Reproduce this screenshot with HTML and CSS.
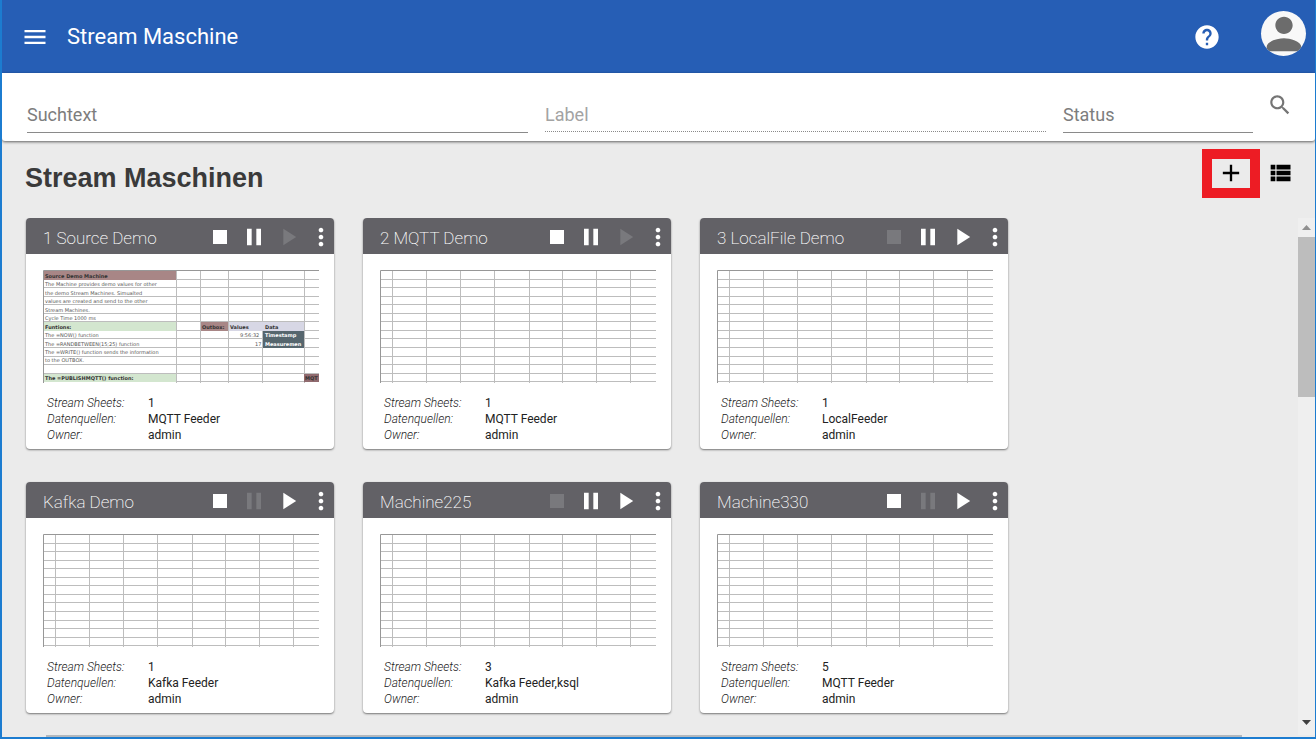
FILE: index.html
```html
<!DOCTYPE html>
<html lang="de">
<head>
<meta charset="utf-8">
<title>Stream Maschine</title>
<link rel="stylesheet" href="styles.css">
</head>
<body>
<svg class="defs" aria-hidden="true">
  <symbol id="i-menu" viewBox="0 0 24 24"><path d="M3 18h18v-2H3v2zm0-5h18v-2H3v2zm0-7v2h18V6H3z"/></symbol>
  <symbol id="i-help" viewBox="0 0 24 24"><path d="M12 2C6.48 2 2 6.48 2 12s4.480 10 10 10 10-4.480 10-10S17.520 2 12 2zm1 17h-2v-2h2v2zm2.070-7.750l-.9.920C13.450 12.900 13 13.500 13 15h-2v-.5c0-1.100.450-2.100 1.170-2.830l1.240-1.260c.370-.360.590-.860.590-1.410 0-1.100-.9-2-2-2s-2 .9-2 2H8c0-2.210 1.790-4 4-4s4 1.790 4 4c0 .880-.360 1.680-.930 2.250z"/></symbol>
  <symbol id="i-person" viewBox="0 0 24 24"><path d="M12 12c2.210 0 4-1.790 4-4s-1.790-4-4-4-4 1.790-4 4 1.790 4 4 4zm0 2c-2.670 0-8 1.340-8 4v2h16v-2c0-2.660-5.330-4-8-4z"/></symbol>
  <symbol id="i-search" viewBox="0 0 24 24"><path d="M15.500 14h-.79l-.28-.27C15.410 12.590 16 11.110 16 9.500 16 5.910 13.090 3 9.500 3S3 5.910 3 9.500 5.910 16 9.500 16c1.610 0 3.090-.59 4.230-1.570l.27.28v.79l5 4.990L20.490 19l-4.990-5zm-6 0C7.010 14 5 11.990 5 9.500S7.010 5 9.500 5 14 7.010 14 9.500 11.990 14 9.500 14z"/></symbol>
  <symbol id="i-add" viewBox="0 0 24 24"><path d="M19 13h-6v6h-2v-6H5v-2h6V5h2v6h6v2z"/></symbol>
  <symbol id="i-list" viewBox="0 0 24 24"><path d="M4 14h4v-4H4v4zm0 5h4v-4H4v4zM4 9h4V5H4v4zm5 5h12v-4H9v4zm0 5h12v-4H9v4zM9 5v4h12V5H9z"/></symbol>
  <symbol id="i-stop" viewBox="0 0 24 24"><path d="M6 6h12v12H6z"/></symbol>
  <symbol id="i-pause" viewBox="0 0 24 24"><path d="M6 19h4V5H6v14zm8-14v14h4V5h-4z"/></symbol>
  <symbol id="i-play" viewBox="0 0 24 24"><path d="M8 5v14l11-7z"/></symbol>
  <symbol id="i-more" viewBox="0 0 24 24"><path d="M12 8c1.100 0 2-.9 2-2s-.9-2-2-2-2 .9-2 2 .9 2 2 2zm0 2c-1.100 0-2 .9-2 2s.9 2 2 2 2-.9 2-2-.9-2-2-2zm0 6c-1.100 0-2 .9-2 2s.9 2 2 2 2-.9 2-2-.9-2-2-2z"/></symbol>
  <symbol id="rows" viewBox="0 0 276 113"><path d="M0 9.500h276M0 17.500h276M0 26.500h276M0 34.500h276M0 43.500h276M0 51.500h276M0 60.500h276M0 68.500h276M0 77.500h276M0 86.500h276M0 94.500h276M0 103.500h276M0 111.500h276"/></symbol>
  <symbol id="sheet" viewBox="0 0 276 113">
    <use href="#rows" width="276" height="113"/>
    <path d="M12.500 0v113M46.500 0v113M80.500 0v113M114.500 0v113M149.500 0v113M182.500 0v113M216.500 0v113M250.500 0v113"/>
    <path class="edge" d="M276 .5H.5V113"/>
  </symbol>
</svg>

<header class="appbar">
  <button class="icon-btn" type="button" aria-label="Menü"><svg class="icon"><use href="#i-menu"/></svg></button>
  <span class="app-title">Stream Maschine</span>
  <button class="icon-btn help" type="button" aria-label="Hilfe"><svg class="icon"><use href="#i-help"/></svg></button>
  <button class="avatar" type="button" aria-label="Benutzer"><svg><use href="#i-person"/></svg></button>
</header>

<form class="filters">
  <input class="field" type="text" placeholder="Suchtext" aria-label="Suchtext">
  <input class="field field-off" type="text" placeholder="Label" aria-label="Label" disabled>
  <select class="field" aria-label="Status"><option>Status</option></select>
  <button class="search" type="button" aria-label="Suchen"><svg><use href="#i-search"/></svg></button>
</form>

<div class="toolbar">
  <h1>Stream Maschinen</h1>
  <button class="add" type="button" aria-label="Hinzufügen"><svg class="icon"><use href="#i-add"/></svg></button>
  <button class="icon-btn" type="button" aria-label="Liste"><svg class="icon"><use href="#i-list"/></svg></button>
</div>

<div class="viewport">
  <main class="cards">
    <article class="card">
      <div class="card-head"><h2>1 Source Demo</h2>
        <button type="button" aria-label="Stopp"><svg class="icon"><use href="#i-stop"/></svg></button>
        <button type="button" aria-label="Pause"><svg class="icon"><use href="#i-pause"/></svg></button>
        <button type="button" aria-label="Start" disabled><svg class="icon"><use href="#i-play"/></svg></button>
        <button class="more" type="button" aria-label="Mehr"><svg class="icon"><use href="#i-more"/></svg></button>
      </div>
      <svg class="thumb" viewBox="0 0 276 113">
        <use href="#rows" width="276" height="113"/>
        <path d="M133.500 0v113M157.500 0v113M185.500 0v113M219.500 0v113M261.500 0v113"/>
        <g stroke="none">
          <path fill="#a88686" d="M0 1h133v9H0zM158 52h27v9h-27z"/>
          <path fill="#d3e6cf" d="M0 52h133v9H0zM0 104h133v8H0z"/>
          <path fill="#d7d7e5" d="M186 52h75v9h-75z"/>
          <path fill="#56666e" d="M220 61h41v17h-41z"/>
          <path fill="#906a6e" d="M261 104h15v8h-15z"/>
        </g>
        <path class="edge" d="M276 .5H.5V113"/>
        <g class="cells">
          <text class="b" x="2" y="8">Source Demo Machine</text>
          <text x="2" y="16">The Machine provides demo values for other</text>
          <text x="2" y="25">the demo Stream Machines. Simualted</text>
          <text x="2" y="33">values are created and send to the other</text>
          <text x="2" y="42">Stream Machines.</text>
          <text x="2" y="50">Cycle Time 1000 ms</text>
          <text class="b" x="2" y="59">Funtions:</text>
          <text class="b" x="159" y="59">Outbox:</text>
          <text class="b" x="187" y="59">Values</text>
          <text class="b" x="222" y="59">Data</text>
          <text x="2" y="67">The =NOW() function</text>
          <text x="197" y="67">9:56:32</text>
          <text class="b inv" x="222" y="67">Timestamp</text>
          <text x="2" y="76">The =RANDBETWEEN(15;25) function</text>
          <text x="212" y="76">17</text>
          <text class="b inv" x="222" y="76">Measuremen</text>
          <text x="2" y="84">The =WRITE() function sends the information</text>
          <text x="2" y="92">to the OUTBOX.</text>
          <text class="b" x="2" y="110">The =PUBLISHMQTT() function:</text>
          <text class="b" x="262" y="110">MQT</text>
        </g>
      </svg>
      <dl><dt>Stream Sheets:</dt><dd>1</dd><dt>Datenquellen:</dt><dd>MQTT Feeder</dd><dt>Owner:</dt><dd>admin</dd></dl>
    </article>

    <article class="card">
      <div class="card-head"><h2>2 MQTT Demo</h2>
        <button type="button" aria-label="Stopp"><svg class="icon"><use href="#i-stop"/></svg></button>
        <button type="button" aria-label="Pause"><svg class="icon"><use href="#i-pause"/></svg></button>
        <button type="button" aria-label="Start" disabled><svg class="icon"><use href="#i-play"/></svg></button>
        <button class="more" type="button" aria-label="Mehr"><svg class="icon"><use href="#i-more"/></svg></button>
      </div>
      <svg class="thumb" viewBox="0 0 276 113"><use href="#sheet"/></svg>
      <dl><dt>Stream Sheets:</dt><dd>1</dd><dt>Datenquellen:</dt><dd>MQTT Feeder</dd><dt>Owner:</dt><dd>admin</dd></dl>
    </article>

    <article class="card">
      <div class="card-head"><h2>3 LocalFile Demo</h2>
        <button type="button" aria-label="Stopp" disabled><svg class="icon"><use href="#i-stop"/></svg></button>
        <button type="button" aria-label="Pause"><svg class="icon"><use href="#i-pause"/></svg></button>
        <button type="button" aria-label="Start"><svg class="icon"><use href="#i-play"/></svg></button>
        <button class="more" type="button" aria-label="Mehr"><svg class="icon"><use href="#i-more"/></svg></button>
      </div>
      <svg class="thumb" viewBox="0 0 276 113"><use href="#sheet"/></svg>
      <dl><dt>Stream Sheets:</dt><dd>1</dd><dt>Datenquellen:</dt><dd>LocalFeeder</dd><dt>Owner:</dt><dd>admin</dd></dl>
    </article>

    <article class="card">
      <div class="card-head"><h2>Kafka Demo</h2>
        <button type="button" aria-label="Stopp"><svg class="icon"><use href="#i-stop"/></svg></button>
        <button type="button" aria-label="Pause" disabled><svg class="icon"><use href="#i-pause"/></svg></button>
        <button type="button" aria-label="Start"><svg class="icon"><use href="#i-play"/></svg></button>
        <button class="more" type="button" aria-label="Mehr"><svg class="icon"><use href="#i-more"/></svg></button>
      </div>
      <svg class="thumb" viewBox="0 0 276 113"><use href="#sheet"/></svg>
      <dl><dt>Stream Sheets:</dt><dd>1</dd><dt>Datenquellen:</dt><dd>Kafka Feeder</dd><dt>Owner:</dt><dd>admin</dd></dl>
    </article>

    <article class="card">
      <div class="card-head"><h2>Machine225</h2>
        <button type="button" aria-label="Stopp" disabled><svg class="icon"><use href="#i-stop"/></svg></button>
        <button type="button" aria-label="Pause"><svg class="icon"><use href="#i-pause"/></svg></button>
        <button type="button" aria-label="Start"><svg class="icon"><use href="#i-play"/></svg></button>
        <button class="more" type="button" aria-label="Mehr"><svg class="icon"><use href="#i-more"/></svg></button>
      </div>
      <svg class="thumb" viewBox="0 0 276 113"><use href="#sheet"/></svg>
      <dl><dt>Stream Sheets:</dt><dd>3</dd><dt>Datenquellen:</dt><dd>Kafka Feeder,ksql</dd><dt>Owner:</dt><dd>admin</dd></dl>
    </article>

    <article class="card">
      <div class="card-head"><h2>Machine330</h2>
        <button type="button" aria-label="Stopp"><svg class="icon"><use href="#i-stop"/></svg></button>
        <button type="button" aria-label="Pause" disabled><svg class="icon"><use href="#i-pause"/></svg></button>
        <button type="button" aria-label="Start"><svg class="icon"><use href="#i-play"/></svg></button>
        <button class="more" type="button" aria-label="Mehr"><svg class="icon"><use href="#i-more"/></svg></button>
      </div>
      <svg class="thumb" viewBox="0 0 276 113"><use href="#sheet"/></svg>
      <dl><dt>Stream Sheets:</dt><dd>5</dd><dt>Datenquellen:</dt><dd>MQTT Feeder</dd><dt>Owner:</dt><dd>admin</dd></dl>
    </article>
  </main>
  <div class="vbar" aria-hidden="true">
    <svg viewBox="0 0 17 19"><path fill="#8f8f8f" d="M4 12l4.500-5 4.500 5z"/></svg>
    <div class="vthumb"></div>
    <svg class="down" viewBox="0 0 17 19"><path fill="#404040" d="M4 4l4.500 5L13 4z"/></svg>
  </div>
</div>
<div class="hbar" aria-hidden="true"><div class="hthumb"></div></div>
</body>
</html>
```

FILE: styles.css
```css
* { box-sizing: border-box; }

body {
  margin: 0;
  height: 100vh;
  display: flex;
  flex-direction: column;
  overflow: hidden;
  border: solid #1c7cd0;
  border-width: 0 1px 2px 2px;
  background: #ebebeb;
  color: #222;
  font-family: Roboto, sans-serif;
}

button {
  display: flex;
  align-items: center;
  justify-content: center;
  flex: none;
  padding: 0;
  border: 0;
  background: none;
  color: inherit;
}

svg { flex: none; fill: currentColor; }
.defs { position: absolute; width: 0; height: 0; }
.icon { width: 28px; height: 28px; }
.icon-btn { width: 28px; height: 28px; }

.appbar {
  display: flex;
  align-items: center;
  flex: none;
  height: 73px;
  padding: 0 9px 0 19px;
  background: #265eb5;
  color: #fff;
}
.app-title { margin-left: 18px; font-size: 22px; line-height: 28px; }
.help { margin-left: auto; }
.avatar {
  width: 45px;
  height: 45px;
  margin: 0 0 6px 40px;
  border-radius: 50%;
  overflow: hidden;
  background: #f8f8f8;
  color: #6c6c6c;
}
.avatar svg { width: 52px; height: 52px; }

.filters {
  display: grid;
  grid-template-columns: 1fr 1fr 190px 20px;
  gap: 17px;
  flex: none;
  padding: 19px 25px 8px;
  background: #fff;
  border-radius: 0 0 3px 3px;
  box-shadow: 0 1px 3px rgba(0, 0, 0, .6);
}
.field {
  width: 100%;
  height: 41px;
  padding: 4px 0 0;
  border: 0;
  border-bottom: 1px solid #8a8a8a;
  border-radius: 0;
  background: none;
  appearance: none;
  color: #7d7d7d;
  font: 18px Roboto, sans-serif;
}
.field::placeholder { color: #7d7d7d; opacity: 1; }
.field-off { height: 40px; padding-top: 5px; border-bottom-style: dotted; }
.field-off::placeholder { color: #a3a3a3; }
.search { height: 26px; color: #757575; }
.search svg { width: 26px; height: 26px; }

.toolbar {
  display: flex;
  align-items: center;
  flex: none;
  padding: 8px 21px 20px 23px;
  color: #000;
}
.toolbar h1 {
  margin: 8px auto 0 0;
  color: #3a3a3a;
  font: bold 27px/32px "Liberation Sans", Arial, sans-serif;
}
.toolbar .icon-btn { margin-bottom: 2px; }
.add {
  width: 58px;
  height: 49px;
  margin-right: 6px;
  padding-bottom: 2px;
  border: 10px solid #ed1c24;
}

.viewport { display: flex; flex: 1; min-height: 0; }
.cards {
  display: grid;
  grid-template-columns: repeat(auto-fill, 308px);
  align-content: start;
  gap: 33px 29px;
  flex: 1;
  overflow: hidden;
  padding-left: 24px;
}
.card {
  border-radius: 4px;
  background: #fff;
  box-shadow: 0 1px 2px rgba(0, 0, 0, .5);
}
.card-head {
  display: flex;
  align-items: center;
  gap: 6px;
  height: 36px;
  padding: 2px 0 0 17px;
  border-radius: 4px 4px 0 0;
  background: #626166;
  color: #fff;
}
.card-head h2 {
  flex: 1;
  margin: 2px 0 0;
  font-size: 17px;
  font-weight: 200;
  line-height: 20px;
}
.card-head button { width: 28px; height: 28px; }
.card-head button:disabled { color: #79797d; }
.card-head .more { width: 26px; }

.thumb {
  display: block;
  width: 276px;
  height: 113px;
  margin: 16px 0 12px 17px;
  fill: none;
  stroke: #bdbdbd;
}
.edge { stroke: #979797; }
.cells {
  fill: #555;
  stroke: none;
  font-family: "DejaVu Sans", sans-serif;
  font-size: 5px;
}
.b { fill: #333; font-weight: bold; }
.inv { fill: #fff; }

dl {
  display: grid;
  grid-template-columns: 101px 1fr;
  margin: 0;
  padding: 0 8px 6px 21px;
  font-size: 12px;
  line-height: 16px;
}
dt { font-style: italic; font-weight: 300; }
dd { margin: 0; }

.vbar {
  display: flex;
  flex-direction: column;
  flex: none;
  width: 17px;
  background: #efefef;
}
.vbar svg { width: 17px; height: 19px; }
.vthumb { height: 31%; background: #bdbdbd; }
.vbar .down { margin-top: auto; }

.hbar { flex: none; height: 2px; padding: 0 73px 0 44px; }
.hthumb { height: 100%; background: #b3b8bd; }
```
